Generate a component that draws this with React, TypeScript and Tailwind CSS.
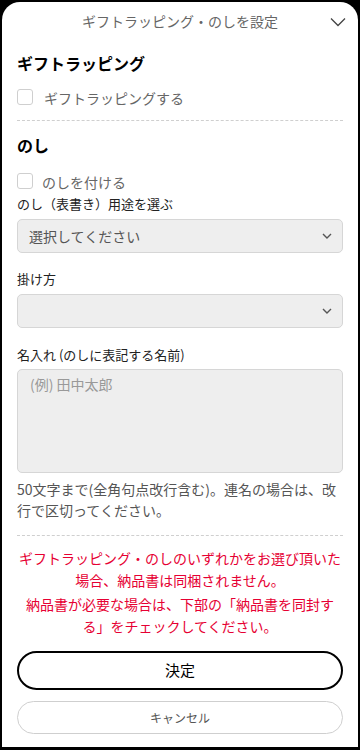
import React from 'react';

const Checkbox = ({ label, gap, mt }: { label: string; gap: string; mt: string }) => (
  <label className={`${mt} flex h-[24px] items-center ${gap}`}>
    <span className="h-[16px] w-[16px] rounded-[3px] border border-[#cfcfcf] bg-white" />
    <span className="mt-[3px] text-[14px] text-[#666]">{label}</span>
  </label>
);

const SelectBox = ({ value }: { value?: string }) => (
  <div className="mt-[5px] flex h-[34px] items-center justify-between rounded-[5px] border border-[#d6d6d6] bg-[#eeeeee] pl-[11px] pr-[10px]">
    <span className="text-[14px] text-[#555]">{value}</span>
    <svg width="10" height="6" viewBox="0 0 10 6" fill="none">
      <path d="M1 1l4 4 4-4" stroke="#555" strokeWidth="1.4" />
    </svg>
  </div>
);

export default function App() {
  return (
    <div className="h-[750px] w-[360px] bg-black px-[2px] pt-[2px] pb-[3px] font-['Noto_Sans_CJK_JP',sans-serif]">
      <div className="flex h-full flex-col rounded-t-[18px] bg-white">
        {/* Header */}
        <div className="flex h-[38px] items-center px-[12px]">
          <div className="w-[16px]" />
          <h1 className="flex-1 text-center text-[14px] text-[#666]">ギフトラッピング・のしを設定</h1>
          <svg width="16" height="10" viewBox="0 0 16 10" fill="none" className="mt-[2px]">
            <path d="M1 1.5l7 7 7-7" stroke="#444" strokeWidth="1.3" />
          </svg>
        </div>

        <div className="flex flex-col px-[15px]">
          {/* Gift wrapping */}
          <h2 className="mt-[11px] text-[16px] font-bold leading-[24px] text-black">ギフトラッピング</h2>
          <Checkbox label="ギフトラッピングする" gap="gap-[11px]" mt="mt-[10px]" />

          <div className="mt-[11px] border-t border-dashed border-[#cfcfcf]" />

          {/* Noshi */}
          <h2 className="mt-[12px] text-[16px] font-bold leading-[24px] text-black">のし</h2>
          <Checkbox label="のしを付ける" gap="gap-[9px]" mt="mt-[12px]" />

          <p className="mt-[1px] text-[13px] leading-[20px] text-[#222]">のし（表書き）用途を選ぶ</p>
          <SelectBox value="選択してください" />

          <p className="mt-[16px] text-[13px] leading-[20px] text-[#222]">掛け方</p>
          <SelectBox />

          <p className="mt-[17px] text-[13px] leading-[20px] text-[#222]">名入れ (のしに表記する名前)</p>
          <textarea
            placeholder="(例) 田中太郎"
            className="mt-[4px] h-[104px] resize-none rounded-[5px] border border-[#d6d6d6] bg-[#eeeeee] px-[12px] py-[4px] text-[14px] leading-[20px] text-[#555] placeholder:text-[#999]"
          />
          <p className="mt-[6px] text-[14px] leading-[21px] text-[#555]">
            50文字まで(全角句点改行含む)。連名の場合は、改行で区切ってください。
          </p>

          <div className="mt-[14px] border-t border-dashed border-[#cfcfcf]" />

          {/* Notice */}
          <div className="mt-[11px] text-center text-[14px] leading-[22px] text-[#e60033]">
            <p>ギフトラッピング・のしのいずれかをお選び頂いた場合、納品書は同梱されません。</p>
            <p className="mt-[2px]">納品書が必要な場合は、下部の「納品書を同封する」をチェックしてください。</p>
          </div>

          {/* Actions */}
          <button className="mt-[14px] h-[39px] rounded-full border-2 border-black bg-white text-[15px] text-black">
            決定
          </button>
          <button className="mt-[11px] h-[33px] rounded-full border border-[#cfcfcf] bg-white text-[12px] text-[#555]">
            キャンセル
          </button>
        </div>
      </div>
    </div>
  );
}
